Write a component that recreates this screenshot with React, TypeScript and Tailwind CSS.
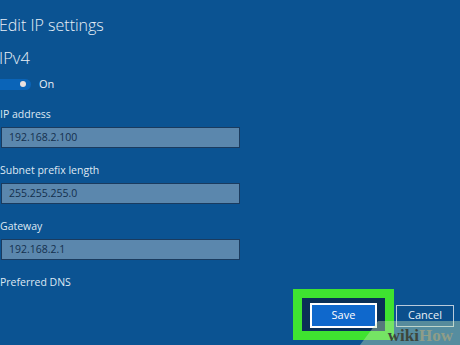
import React from "react";

const fields = [
  { label: "IP address", value: "192.168.2.100" },
  { label: "Subnet prefix length", value: "255.255.255.0" },
  { label: "Gateway", value: "192.168.2.1" },
];

const App = (): React.ReactElement => {
  return (
    <div
      className="relative w-[460px] h-[345px] overflow-hidden bg-[#0b5392] text-[#dfe8f2]"
      style={{ fontFamily: '"Open Sans", "Noto Sans", sans-serif' }}
    >
      <div className="flex flex-col pl-0 pt-[14px] -ml-[1px]">
        <h1 className="text-[16px] leading-[22px] font-light text-[#e8eff7]">
          Edit IP settings
        </h1>
        <h2 className="mt-[11px] text-[16.5px] leading-[22px] font-light text-[#e8eff7]">
          IPv4
        </h2>

        <div className="mt-[8px] flex items-center gap-[8px] h-[14px]">
          <div className="relative w-[32px] h-[11px] rounded-r-full bg-[#0a64b8]">
            <span className="absolute right-[5px] top-[2px] w-[6px] h-[6px] rounded-full bg-[#e8e0e0]" />
          </div>
          <span className="text-[11px] text-[#e8eff7]">On</span>
        </div>

        {fields.map((f, i) => (
          <div key={f.label} className={i === 0 ? "mt-[15px]" : "mt-[14px]"}>
            <div className="text-[10.5px] leading-[16px] pl-[1px]">{f.label}</div>
            <div className="mt-[5px] ml-[2px] w-[239px] h-[21px] flex items-center px-[7px] bg-[#5b87ad] border border-[#1a3b5f] text-[10.5px] text-[#14304d]">
              {f.value}
            </div>
          </div>
        ))}

        <div className="mt-[14px] text-[10.5px] leading-[16px] pl-[1px]">
          Preferred DNS
        </div>
      </div>

      <div className="absolute right-[6px] bottom-[5px] flex items-center gap-[2px]">
        <div className="p-[9px] bg-[#3fe330]">
          <div className="px-[8px] py-[3px] bg-[#0a2f57]">
            <button className="w-[67px] h-[25px] border-2 border-white bg-[#0f68cc] text-[11px] text-white">
              Save
            </button>
          </div>
        </div>
        <button className="mt-[2px] w-[58px] h-[22px] border border-[#b9cadb] bg-[#0b4f8c] text-[11px] text-[#e8eff7]">
          Cancel
        </button>
      </div>

      <div className="absolute right-0 bottom-0 w-[100px] h-[24px] bg-[#c8e6b4]/40 [clip-path:polygon(18%_0,100%_0,100%_100%,0_100%)]" />
      <div
        className="absolute right-[7px] bottom-[1px] text-[17px] font-bold leading-[17px]"
        style={{ fontFamily: '"Liberation Serif", serif' }}
      >
        <span className="text-[#3d463c]">wiki</span>
        <span className="text-[#8f9d88]">How</span>
      </div>
    </div>
  );
};

export default App;
